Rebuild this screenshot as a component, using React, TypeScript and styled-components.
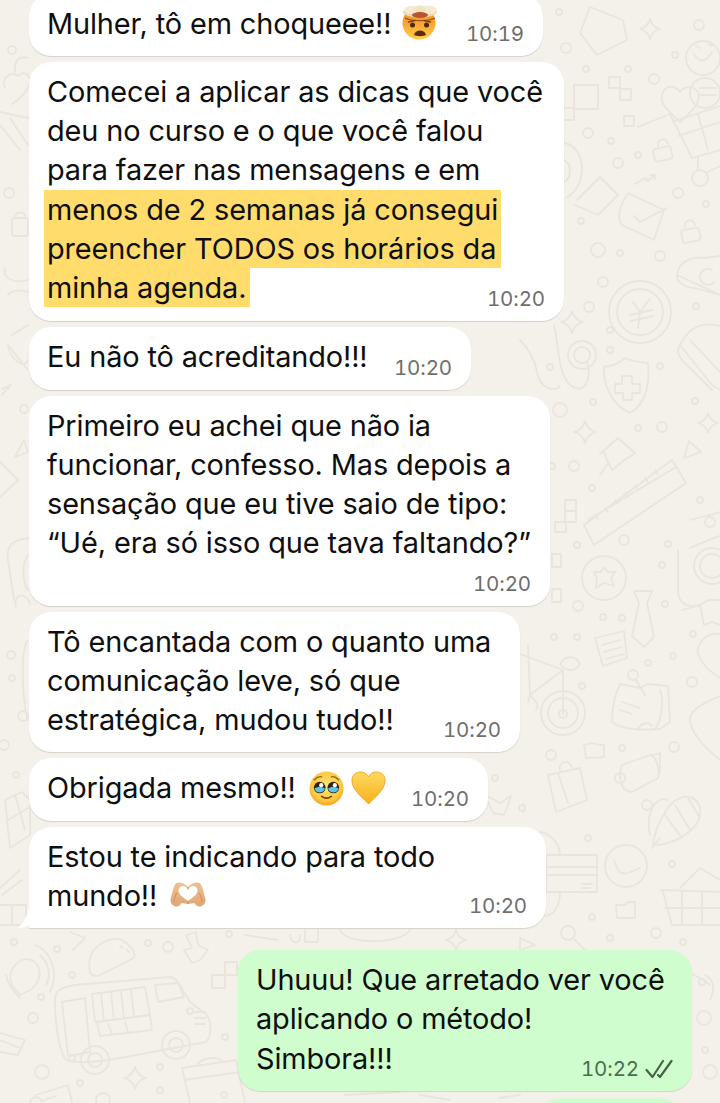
import { createGlobalStyle, styled } from "styled-components";

const GlobalStyle = createGlobalStyle`
  html, body {
    margin: 0;
    padding: 0;
    background: #f4f1ea;
  }
`;

const Page = styled.div`
  position: relative;
  width: 720px;
  height: 1103px;
  overflow: hidden;
  background: #f4f1ea;
  font-family: Inter, "Liberation Sans", sans-serif;
`;

const DoodleLayer = styled.svg`
  position: absolute;
  inset: 0;
  fill: none;
  stroke: #e9e5dd;
  stroke-width: 1.8;
  stroke-linecap: round;
  stroke-linejoin: round;
`;

const Thread = styled.div`
  position: relative;
  display: flex;
  flex-direction: column;
  gap: 6px;
  margin-top: -6.5px;
  padding-left: 29px;
`;

const Bubble = styled.div<{ $width: number; $bottom?: number; $outgoing?: boolean; $tail?: boolean }>`
  position: relative;
  box-sizing: border-box;
  width: ${(p) => p.$width}px;
  padding: 10px 18px ${(p) => p.$bottom ?? 13}px;
  margin-left: ${(p) => (p.$outgoing ? 209 : 0)}px;
  border-radius: 22px;
  border-bottom-left-radius: ${(p) => (p.$tail ? 0 : 22)}px;
  background: ${(p) => (p.$outgoing ? "#d0fdcd" : "#ffffff")};
  box-shadow: 0 1px 1px rgba(0, 0, 0, 0.13);
  color: #0f0f0f;
  font-size: 28.9px;
  line-height: 39.25px;
  letter-spacing: -0.12px;
  white-space: nowrap;
`;

const OutgoingGap = styled.div`
  height: 10px;
`;

const NextBubble = styled.div`
  height: 40px;
  width: 140px;
  margin: 1px 0 0 511px;
  border-radius: 22px;
  background: #d0fdcd;
`;

const Line = styled.div``;

const Marked = styled.div<{ $width: number }>`
  width: ${(p) => p.$width}px;
  margin-left: -3px;
  padding-left: 3px;
  box-sizing: border-box;
  background: #ffdc6c;
`;

const Meta = styled.div<{ $outgoing?: boolean }>`
  position: absolute;
  right: 19px;
  bottom: 10px;
  display: flex;
  align-items: center;
  gap: 6px;
  color: ${(p) => (p.$outgoing ? "#4c6d4f" : "#6e6e6e")};
  font-size: 20.5px;
  font-variant-numeric: tabular-nums;
  line-height: 24px;
`;

const Emoji = styled.svg<{ $gap?: number; $drop?: number }>`
  display: inline-block;
  vertical-align: ${(p) => p.$drop ?? -8}px;
  margin-left: ${(p) => p.$gap ?? 0}px;
`;

const Tail = styled.svg`
  position: absolute;
  left: -11px;
  bottom: 0;
`;

function Time({ value, outgoing }: { value: string; outgoing?: boolean }) {
  return (
    <Meta $outgoing={outgoing}>
      {value}
      {outgoing && (
        <svg width="28" height="20" viewBox="0 0 28 20" fill="none" stroke="#46654a" strokeWidth="2.2" strokeLinecap="round" strokeLinejoin="round">
          <path d="M1.5 11 L7.5 18 L18 2" />
          <path d="M13 16 L15 18 L26.5 2" />
        </svg>
      )}
    </Meta>
  );
}

function MindBlown() {
  return (
    <Emoji width="38" height="36" viewBox="0 0 38 36" $gap={3} $drop={-6}>
      <defs>
        <linearGradient id="blownFace" x1="0" y1="0" x2="0" y2="1">
          <stop offset="0" stopColor="#ee8a26" />
          <stop offset="0.55" stopColor="#f9a92f" />
          <stop offset="1" stopColor="#ffcf4a" />
        </linearGradient>
      </defs>
      <circle cx="17" cy="19" r="16.5" fill="url(#blownFace)" />
      <ellipse cx="18" cy="8" rx="17" ry="5.5" fill="#efd7b0" />
      <ellipse cx="9" cy="6" rx="7" ry="4" fill="#f7ead2" />
      <ellipse cx="27" cy="6" rx="8" ry="4.2" fill="#f7ead2" />
      <ellipse cx="18" cy="4.5" rx="6" ry="3" fill="#f3e2c4" />
      <ellipse cx="18" cy="11" rx="8" ry="3" fill="#bb5430" />
      <path d="M3 14 C10 17.5 26 17.5 33 14" stroke="#a84a22" strokeWidth="1.2" fill="none" />
      <circle cx="10.5" cy="21" r="2.5" fill="#4a2a12" />
      <circle cx="24.5" cy="21" r="2.5" fill="#4a2a12" />
      <path d="M6.5 18 L13 16.5 M28.5 18 L22 16.5" stroke="#7a4312" strokeWidth="1.4" strokeLinecap="round" />
      <path d="M12 31 C13 25 23 25 24 31 C21 32.5 15 32.5 12 31 Z" fill="#5b2d14" />
    </Emoji>
  );
}

function Pleading() {
  return (
    <Emoji width="35" height="35" viewBox="0 0 36 36" $gap={5}>
      <defs>
        <radialGradient id="pleadFace" cx="0.5" cy="0.42" r="0.62">
          <stop offset="0" stopColor="#ffe774" />
          <stop offset="0.7" stopColor="#fdc93f" />
          <stop offset="1" stopColor="#f39a1c" />
        </radialGradient>
      </defs>
      <circle cx="18" cy="18" r="17.5" fill="url(#pleadFace)" />
      <circle cx="11" cy="17" r="6" fill="#2f2116" />
      <circle cx="25" cy="17" r="6" fill="#2f2116" />
      <path d="M5.6 18 A5.6 5.6 0 0 0 16.4 18 Q11 14.5 5.6 18 Z" fill="#59c6e6" />
      <path d="M19.6 18 A5.6 5.6 0 0 0 30.4 18 Q25 14.5 19.6 18 Z" fill="#59c6e6" />
      <circle cx="12.6" cy="14.6" r="2.2" fill="#fff" />
      <circle cx="26.6" cy="14.6" r="2.2" fill="#fff" />
      <path d="M5.5 9 C8 6.5 11 5.5 13 6 M30.5 9 C28 6.5 25 5.5 23 6" stroke="#9a6118" strokeWidth="1.4" fill="none" strokeLinecap="round" />
      <path d="M13 26 Q18 30 23 26" stroke="#7a4312" strokeWidth="1.7" fill="none" strokeLinecap="round" />
    </Emoji>
  );
}

function YellowHeart() {
  return (
    <Emoji width="35" height="35" viewBox="0 0 36 36" $gap={7}>
      <defs>
        <linearGradient id="yellowHeart" x1="0" y1="0" x2="0" y2="1">
          <stop offset="0" stopColor="#ffd95f" />
          <stop offset="1" stopColor="#f6b01c" />
        </linearGradient>
      </defs>
      <path d="M18 34 C13 28 1 20 1 10 C1 4 5 1 10 1 C13.5 1 16.5 3 18 6 C19.5 3 22.5 1 26 1 C31 1 35 4 35 10 C35 20 23 28 18 34 Z" fill="url(#yellowHeart)" stroke="#eda52b" strokeWidth="1" />
    </Emoji>
  );
}

function HeartHands() {
  return (
    <Emoji width="36" height="25" viewBox="0 0 36 25" $gap={5} $drop={-1}>
      <defs>
        <linearGradient id="handSkin" x1="0" y1="0" x2="0" y2="1">
          <stop offset="0" stopColor="#f0c092" />
          <stop offset="1" stopColor="#dfa672" />
        </linearGradient>
      </defs>
      <path fill="url(#handSkin)" d="M18 5 C15 1.5 11 0 8 0.5 C5.5 1 4.5 3 3.5 6 L0.5 17 C0 20.5 2 24 6 24.5 C9 24.5 10.5 23 11.5 21 L18 22 L24.5 21 C25.5 23 27 24.5 30 24.5 C34 24 36 20.5 35.5 17 L32.5 6 C31.5 3 30.5 1 28 0.5 C25 0 21 1.5 18 5 Z" />
      <path fill="#fff" d="M18 19 C14 16 8.5 13 8.5 8.5 C8.5 5.5 10.5 4 13 4 C15.5 4 17 5.5 18 7.5 C19 5.5 20.5 4 23 4 C25.5 4 27.5 5.5 27.5 8.5 C27.5 13 22 16 18 19 Z" />
      <path fill="none" stroke="#c48a5e" strokeWidth="0.9" d="M18 5 V7.5 M18 19 V22 M6.5 11 L3.5 20 M29.5 11 L32.5 20" />
    </Emoji>
  );
}

function Sparkle({ x, y, s = 10 }: { x: number; y: number; s?: number }) {
  return <path d={`M${x} ${y - s} Q${x + s * 0.2} ${y - s * 0.2} ${x + s} ${y} Q${x + s * 0.2} ${y + s * 0.2} ${x} ${y + s} Q${x - s * 0.2} ${y + s * 0.2} ${x - s} ${y} Q${x - s * 0.2} ${y - s * 0.2} ${x} ${y - s} Z`} />;
}

const dots: [number, number, number][] = [
  [559, 12, 3], [566, 48, 5], [586, 69, 3], [628, 69, 3], [654, 79, 5], [699, 25, 5], [675, 55, 3], [588, 133, 5],
  [611, 141, 3], [638, 155, 3], [618, 163, 5], [678, 193, 5], [706, 204, 3], [581, 221, 3], [598, 250, 7], [620, 253, 3],
  [660, 256, 5], [603, 282, 5], [589, 307, 5], [696, 306, 3], [610, 330, 3], [550, 367, 3], [560, 410, 7], [593, 402, 3],
  [610, 350, 3], [660, 366, 3], [695, 401, 3], [638, 428, 3], [662, 427, 5], [574, 466, 5], [552, 466, 3], [592, 488, 3],
  [700, 500, 3], [710, 522, 5], [668, 544, 3], [577, 545, 3], [624, 540, 5], [662, 565, 3], [578, 606, 5], [603, 617, 3],
  [622, 618, 3], [577, 637, 3], [554, 637, 3], [665, 604, 3], [582, 686, 3], [693, 634, 3], [673, 656, 3], [648, 663, 3],
  [692, 682, 5], [622, 748, 3], [551, 755, 5], [674, 747, 5], [495, 778, 3], [522, 808, 3], [620, 778, 5], [647, 805, 5],
  [588, 838, 3], [672, 864, 3], [592, 917, 3], [656, 933, 5], [683, 942, 3], [610, 938, 3], [12, 50, 4], [9, 193, 5],
  [24, 409, 4], [11, 655, 4], [12, 678, 3], [23, 716, 5], [4, 745, 5], [16, 775, 3], [14, 942, 3], [57, 949, 3],
  [148, 943, 3], [168, 947, 5], [229, 934, 3], [72, 975, 3], [41, 997, 3], [33, 1018, 5], [72, 1058, 3], [190, 1011, 3],
  [225, 1037, 3], [160, 1067, 3], [80, 1083, 3], [160, 1090, 3], [42, 1072, 7], [702, 982, 3], [704, 1018, 7], [710, 1072, 7],
  [705, 1050, 3], [224, 1095, 3], [103, 1100, 7],
];

function Doodles() {
  return (
    <DoodleLayer width="720" height="1103" viewBox="0 0 720 1103">
      {dots.map(([x, y, r], i) => (
        <circle key={i} cx={x} cy={y} r={r} />
      ))}

      {/* top right */}
      <path d="M590 7 L623 20 L627 40 L597 55 L580 33 Z" />
      <Sparkle x={650} y={29} s={10} />
      <circle cx="703" cy="58" r="17" />
      <path d="M694 54 Q703 68 712 52 M696 46 L700 48 M708 44 L712 46" />
      <path d="M680 122 C668 110 658 104 663 92 C668 84 676 86 680 92 C684 86 693 85 698 92 C702 104 690 112 680 122" />
      <circle cx="705" cy="93" r="15" />
      <path d="M700 88 H716 M700 95 H716" />
      <rect x="574" y="85" width="24" height="24" />
      <rect x="609" y="77" width="11" height="11" />
      <rect x="620" y="89" width="11" height="11" />
      <rect x="624" y="116" width="10" height="10" />
      <path d="M564 108 H574 V120 H564" />
      <path d="M638 127 L670 114 L692 158 L720 150 M672 122 L720 106 M678 136 L720 122 M698 114 L708 150" />
      <circle cx="700" cy="178" r="8" />
      <path d="M698 158 V170 M708 172 L720 166" />
      <rect x="654" y="148" width="18" height="13" rx="3" transform="rotate(-12 660 155)" />
      <path d="M658 146 C657 138 667 137 668 144" />
      <rect x="682" y="229" width="18" height="13" rx="3" transform="rotate(-12 690 236)" />
      <path d="M685 227 C684 219 694 218 695 225" />
      <path d="M564 143 C585 145 590 185 566 198 M564 160 C572 164 572 178 564 182" />
      <path d="M577 200 L600 177 L618 195 L598 215 L575 205" />
      <path d="M635 184 L645 178 L648 181 L655 175 M650 175 H655 V179" />
      <path d="M628 193 L664 210 L654 240 L622 225 Q614 215 628 193 Z M634 216 L640 222 L667 208" />
      <path d="M677 275 C678 262 692 256 704 258 L720 256 M720 295 L695 288 C685 288 676 282 677 275 Z M712 270 A8 8 0 1 0 714 282" />

      {/* coin */}
      <circle cx="640" cy="312" r="31" />
      <circle cx="640" cy="312" r="23" />
      <path d="M633 302 L640 312 L650 299 M630 315 L652 310 M631 321 L653 316 M640 312 L638 328" />

      {/* right middle */}
      <path d="M625 358 C633 362 643 362 648 363 C650 385 645 404 630 413 C612 405 603 385 604 367 C612 366 620 363 625 358 Z" />
      <path d="M622 376 H632 V384 H640 V393 H632 V400 H623 V393 H615 V384 H622 Z" />
      <path d="M680 345 C690 325 705 322 720 326 M680 345 L712 385 L720 390 M690 340 L720 372 M680 345 C675 352 680 360 690 368 L712 390" />
      <path d="M554 325 C560 350 557 380 575 388 C590 392 590 370 587 362" />
      <path d="M520 340 C530 350 535 362 537 372 C540 390 556 392 560 386" />
      <circle cx="582" cy="355" r="14" />
      <circle cx="582" cy="355" r="8" />
      <Sparkle x={572} y={322} s={11} />
      <Sparkle x={585} y={432} s={11} />
      <Sparkle x={708} y={423} s={10} />
      <path d="M689 441 L701 452 L684 458 Z" />
      <path d="M618 438 L635 453 C630 458 625 458 622 462 L612 470 L606 458 C606 454 603 450 600 454 Z" />
      <path d="M609 462 L600 475" />
      <path d="M584 525 L672 460 L686 483 L594 545 Z M588 520 L676 467" />
      <path d="M595 515 L598 519 M605 508 L608 512 M615 500 L618 504 M625 493 L628 497 M635 485 L638 489 M645 478 L648 482 M655 470 L658 474" />
      <rect x="565" y="500" width="11" height="11" />
      <rect x="565" y="511" width="11" height="11" />
      <rect x="555" y="522" width="11" height="10" />
      <path d="M690 520 L720 512" />

      {/* tie, star, bike, bag */}
      <circle cx="604" cy="578" r="22" />
      <path d="M604 567 L608 572 L615 572 L611 578 L614 586 L604 583 L596 588 L597 578 L594 572 L601 572 Z" />
      <rect x="552" y="554" width="9" height="13" />
      <rect x="552" y="589" width="9" height="13" />
      <path d="M634 591 H652 L647 603 L654 637 L644 647 L632 636 L639 603 Z" />
      <path d="M595 638 L624 631 L627 658 L603 666 Z M602 645 L620 640 M604 652 L622 647 M606 659 L624 654" />
      <circle cx="563" cy="713" r="22" />
      <circle cx="563" cy="713" r="15" />
      <circle cx="563" cy="714" r="4" />
      <path d="M563 714 L563 670 M520 654 L563 670 L530 695 M528 645 L530 695 L528 702 M560 664 C566 654 576 656 580 664 C576 672 566 672 560 664" />
      <path d="M530 695 C536 702 540 705 536 710" />
      <path d="M620 684 C612 700 612 715 612 722 C620 728 634 731 660 729 L670 722 L668 686 L648 684 L640 688 Z" />
      <circle cx="633" cy="675" r="5" />
      <path d="M636 680 L645 695 M622 702 L640 708 M620 710 L632 714 M638 730 C640 722 650 722 652 726 M660 690 C664 700 662 720 655 729" />
      <path d="M690 548 C715 537 720 536 720 536 M678 550 V590 C678 605 692 612 708 600 L720 600" />
      <circle cx="712" cy="566" r="18" />
      <circle cx="712" cy="566" r="12" />
      <path d="M682 610 L700 605 L704 625 L712 622 L720 625" />
      <path d="M720 634 C705 632 696 645 698 654 C702 665 710 672 720 678" />
      <path d="M720 696 C700 704 688 712 690 722 C694 738 708 750 720 760" />
      <path d="M584 745 L592 743 L600 745 H604 V757 L586 758 Z" />

      {/* lower right */}
      <path d="M548 775 L580 768 L587 800 L556 812 Z M558 773 L568 803 M560 770 C558 762 568 758 572 767" />
      <path d="M622 765 L650 755 C656 755 660 770 658 778 L632 792 C620 792 618 775 622 765 Z M652 755 L660 753 L660 772 L658 776" />
      <path d="M485 795 L500 803 L511 796 L507 808 L504 815 L493 813 Z" />
      <path d="M653 845 C655 825 668 805 676 800 C690 792 702 800 700 815 C698 830 675 845 653 845 Z M652 848 L660 838 M688 798 L700 818 M675 805 L690 830 M665 815 L682 838 M650 835 C645 815 655 795 668 800" />
      <path d="M546 855 H597 V892 H546 Z M546 867 H597 M546 875 H597 M582 884 H592 M582 888 H590" />
      <path d="M560 855 C560 840 545 832 540 832 M560 892 C560 905 555 915 545 916" />
      <circle cx="626" cy="866" r="21" />
      <path d="M614 860 C618 872 620 875 628 873 L640 868" />
      <path d="M661 890 L720 892 M663 892 L672 925 L720 925 M665 908 H720 M682 892 V925 M702 892 V925 M680 888 L700 868 L720 880" />
      <path d="M616 905 H625 L628 902 H635 V918 H617 Z" />
      <circle cx="568" cy="933" r="7" />
      <path d="M573 938 L585 950" />
      <Sparkle x={456} y={940} s={10} />
      <path d="M520 938 L535 945 L520 950 Z" />
      <path d="M650 960 C670 965 700 975 710 985 M705 975 C715 980 715 990 710 1000" />

      {/* left column */}
      <path d="M5 88 C0 78 12 70 18 76 C24 70 30 74 30 82 C28 92 18 100 12 104" />
      <path d="M28 58 C18 55 14 62 15 72 M0 112 L28 118 M0 125 L20 150 M10 118 L28 145" />
      <path d="M5 268 C2 278 14 284 28 280 M8 295 C12 290 20 290 28 292" />
      <rect x="12" y="218" width="16" height="18" rx="3" />
      <path d="M15 218 C15 211 25 211 25 216" />
      <path d="M2 395 L10 385 L8 389 M2 389 L11 385 M12 335 L28 325 M8 345 L28 370 M8 345 C10 360 25 370 28 360" />
      <path d="M15 457 L24 440 L28 452 Z" />
      <path d="M0 462 L18 480 L0 497" />
      <path d="M28 538 C12 540 6 546 8 560 L14 600 M28 555 C20 565 24 585 28 590 M16 607 C12 595 26 590 30 604" />
      <path d="M28 640 C20 650 22 700 28 720" />
      <path d="M5 800 L22 792 L30 800 L30 835 L10 848 Z M8 820 L28 808 M15 795 L25 830" />
      <path d="M0 888 L20 870 M2 895 L22 880 M0 905 H26 V925 H0 M12 905 V925" />
      <path d="M70 932 L85 938 L73 950" />

      {/* truck and neighbours */}
      <path d="M55 1000 C55 990 60 988 75 985 L170 977 C178 977 182 990 190 1002 L206 1014 C212 1022 212 1035 206 1042 L120 1058 C100 1062 75 1064 66 1060 C58 1050 55 1020 55 1000 Z" />
      <path d="M62 1002 L85 998 L90 1052 L68 1056 Z" />
      <path d="M92 994 L145 987 L150 1015 L95 1022 Z M101 994 L104 1021 M111 992 L114 1020 M121 991 L124 1019 M131 989 L134 1017" />
      <path d="M97 1022 L150 1015 L152 1030 L100 1036 Z M108 1024 L112 1034 M125 1022 L128 1032" />
      <path d="M155 985 L178 983 L184 997 L158 1002 Z M195 1012 H205 M195 1018 H205 M195 1024 H205" />
      <circle cx="95" cy="1060" r="14" />
      <circle cx="95" cy="1060" r="7" />
      <circle cx="176" cy="1045" r="14" />
      <circle cx="176" cy="1045" r="7" />
      <path d="M90 972 C85 950 105 935 122 940 C130 945 136 952 134 958 L100 975 C95 977 92 976 90 972 Z M120 946 L123 948 M127 950 L129 952" />
      <path d="M22 960 C12 965 8 975 12 985 L20 995 L30 990 C38 985 42 975 38 966 C34 960 28 958 22 960 Z" />
      <path d="M40 955 C48 962 52 975 46 985 M35 945 C50 950 60 972 50 992 M6 975 C8 985 14 992 20 998" />
      <path d="M186 935 L196 932 L198 945 L208 950 L200 960 L192 963 L184 950 L192 948 Z" />
      <rect x="212" y="975" width="13" height="13" />
      <rect x="225" y="962" width="12" height="13" />
      <Sparkle x={135} y={1078} s={11} />
      <path d="M182 1068 L236 1060 L245 1103 M182 1068 L190 1103 M198 1065 C198 1058 220 1055 222 1062 M184 1080 L240 1072" />
      <path d="M0 1033 L25 1040 L18 1055 L0 1052 M0 1040 L20 1048" />
      <path d="M36 1095 L68 1085 L72 1103 M44 1100 L56 1096" />
      <circle cx="36" cy="1103" r="6" />
      <path d="M245 935 L278 940 M290 935 C292 945 300 945 300 935 M340 930 C345 945 400 945 410 930" />
      <path d="M305 930 V942 H318 V930 M345 1095 L400 1092 M420 1095 L450 1100 M500 1098 L520 1095" />
    </DoodleLayer>
  );
}

export default function App() {
  return (
    <Page>
      <GlobalStyle />
      <Doodles />
      <Thread>
        <Bubble $width={514}>
          <Line>
            Mulher, tô em choqueee!! <MindBlown />
          </Line>
          <Time value="10:19" />
        </Bubble>
        <Bubble $width={535} $bottom={14}>
          <Line>Comecei a aplicar as dicas que você</Line>
          <Line>deu no curso e o que você falou</Line>
          <Line>para fazer nas mensagens e em</Line>
          <Marked $width={457}>menos de 2 semanas já consegui</Marked>
          <Marked $width={457}>preencher TODOS os horários da</Marked>
          <Marked $width={206}>minha agenda.</Marked>
          <Time value="10:20" />
        </Bubble>
        <Bubble $width={442}>
          <Line>Eu não tô acreditando!!!</Line>
          <Time value="10:20" />
        </Bubble>
        <Bubble $width={521} $bottom={43}>
          <Line>Primeiro eu achei que não ia</Line>
          <Line>funcionar, confesso. Mas depois a</Line>
          <Line>sensação que eu tive saio de tipo:</Line>
          <Line>“Ué, era só isso que tava faltando?”</Line>
          <Time value="10:20" />
        </Bubble>
        <Bubble $width={491}>
          <Line>Tô encantada com o quanto uma</Line>
          <Line>comunicação leve, só que</Line>
          <Line>estratégica, mudou tudo!!</Line>
          <Time value="10:20" />
        </Bubble>
        <Bubble $width={459}>
          <Line>
            Obrigada mesmo!! <Pleading />
            <YellowHeart />
          </Line>
          <Time value="10:20" />
        </Bubble>
        <Bubble $width={517} $tail>
          <Tail width="12" height="28" viewBox="0 0 12 28">
            <path d="M12 0 C11 12 7 22 0 28 C4 28 8 27 12 25 Z" fill="#ffffff" />
          </Tail>
          <Line>Estou te indicando para todo</Line>
          <Line>
            mundo!! <HeartHands />
          </Line>
          <Time value="10:20" />
        </Bubble>
        <OutgoingGap />
        <Bubble $width={454} $outgoing>
          <Line>Uhuuu! Que arretado ver você</Line>
          <Line>aplicando o método!</Line>
          <Line>Simbora!!!</Line>
          <Time value="10:22" outgoing />
        </Bubble>
        <NextBubble />
      </Thread>
    </Page>
  );
}
